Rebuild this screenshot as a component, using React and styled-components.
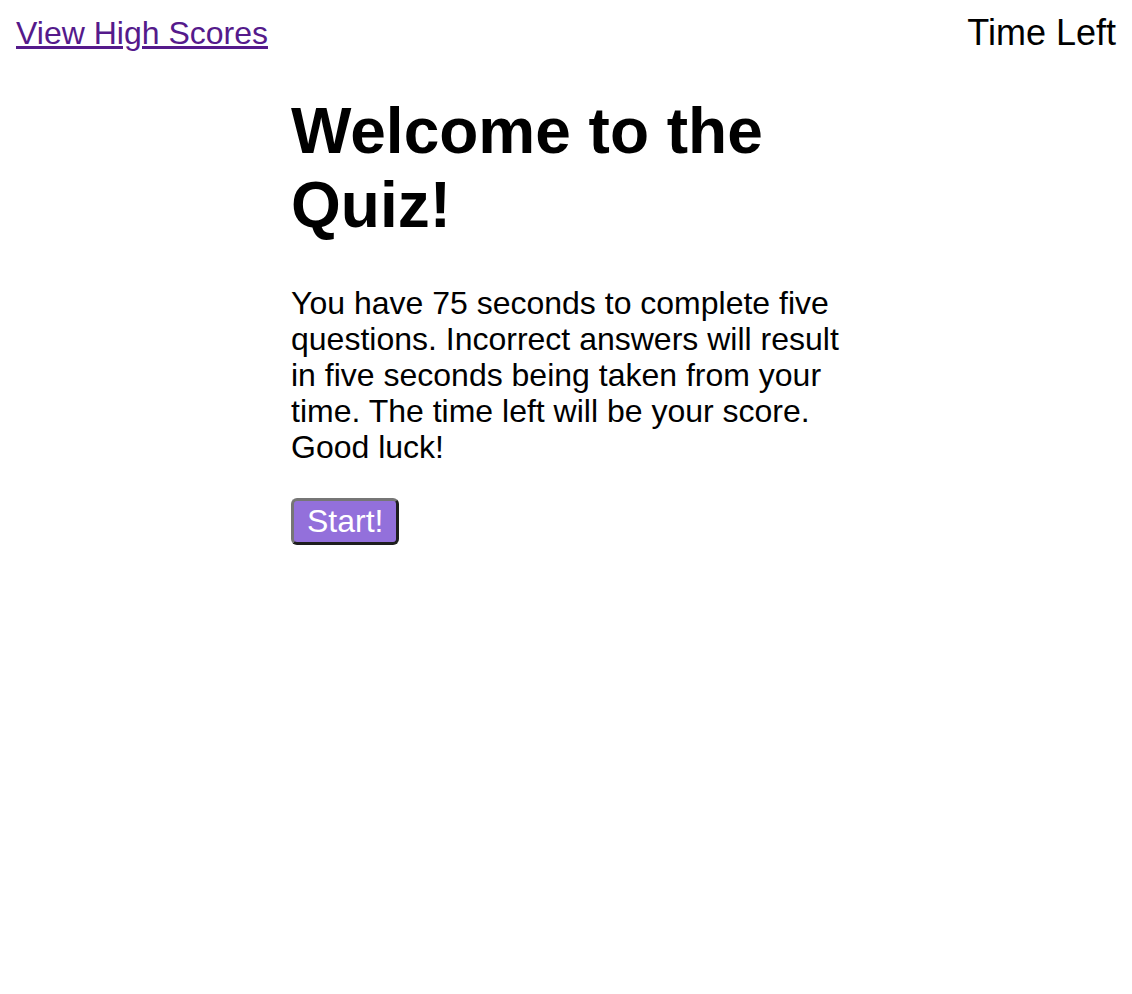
import React from "react";
import styled, { createGlobalStyle } from "styled-components";

const GlobalStyle = createGlobalStyle`
  body {
    margin: 0;
    background: #ffffff;
    font-family: "Liberation Sans", Arial, sans-serif;
    color: #000000;
  }
`;

const Header = styled.header`
  display: flex;
  justify-content: space-between;
  align-items: center;
  padding: 12px 16px 0 16px;
`;

const ScoresLink = styled.a`
  font-size: 32px;
  color: #551a8b;
  text-decoration: underline;
  cursor: pointer;
`;

const Timer = styled.div`
  font-size: 36px;
`;

const Main = styled.main`
  max-width: 550px;
  margin: 0 auto;
`;

const Title = styled.h1`
  font-size: 64px;
  font-weight: bold;
  margin: 40px 0 43px 0;
`;

const Intro = styled.p`
  font-size: 32px;
  line-height: 36px;
  margin: 0 0 33px 0;
`;

const StartButton = styled.button`
  font-family: "Liberation Sans", Arial, sans-serif;
  font-size: 32px;
  color: #ffffff;
  background: #9370db;
  border: 3px solid;
  border-color: #767676 #1e1e1e #1e1e1e #767676;
  border-radius: 6px;
  padding: 2px 13px 2px 13px;
  cursor: pointer;
`;

const App = () => {
  return (
    <>
      <GlobalStyle />
      <Header>
        <ScoresLink href="#">View High Scores</ScoresLink>
        <Timer>Time Left</Timer>
      </Header>
      <Main>
        <Title>Welcome to the Quiz!</Title>
        <Intro>
          You have 75 seconds to complete five questions. Incorrect answers
          will result in five seconds being taken from your time. The time
          left will be your score. Good luck!
        </Intro>
        <StartButton>Start!</StartButton>
      </Main>
    </>
  );
};

export default App;
